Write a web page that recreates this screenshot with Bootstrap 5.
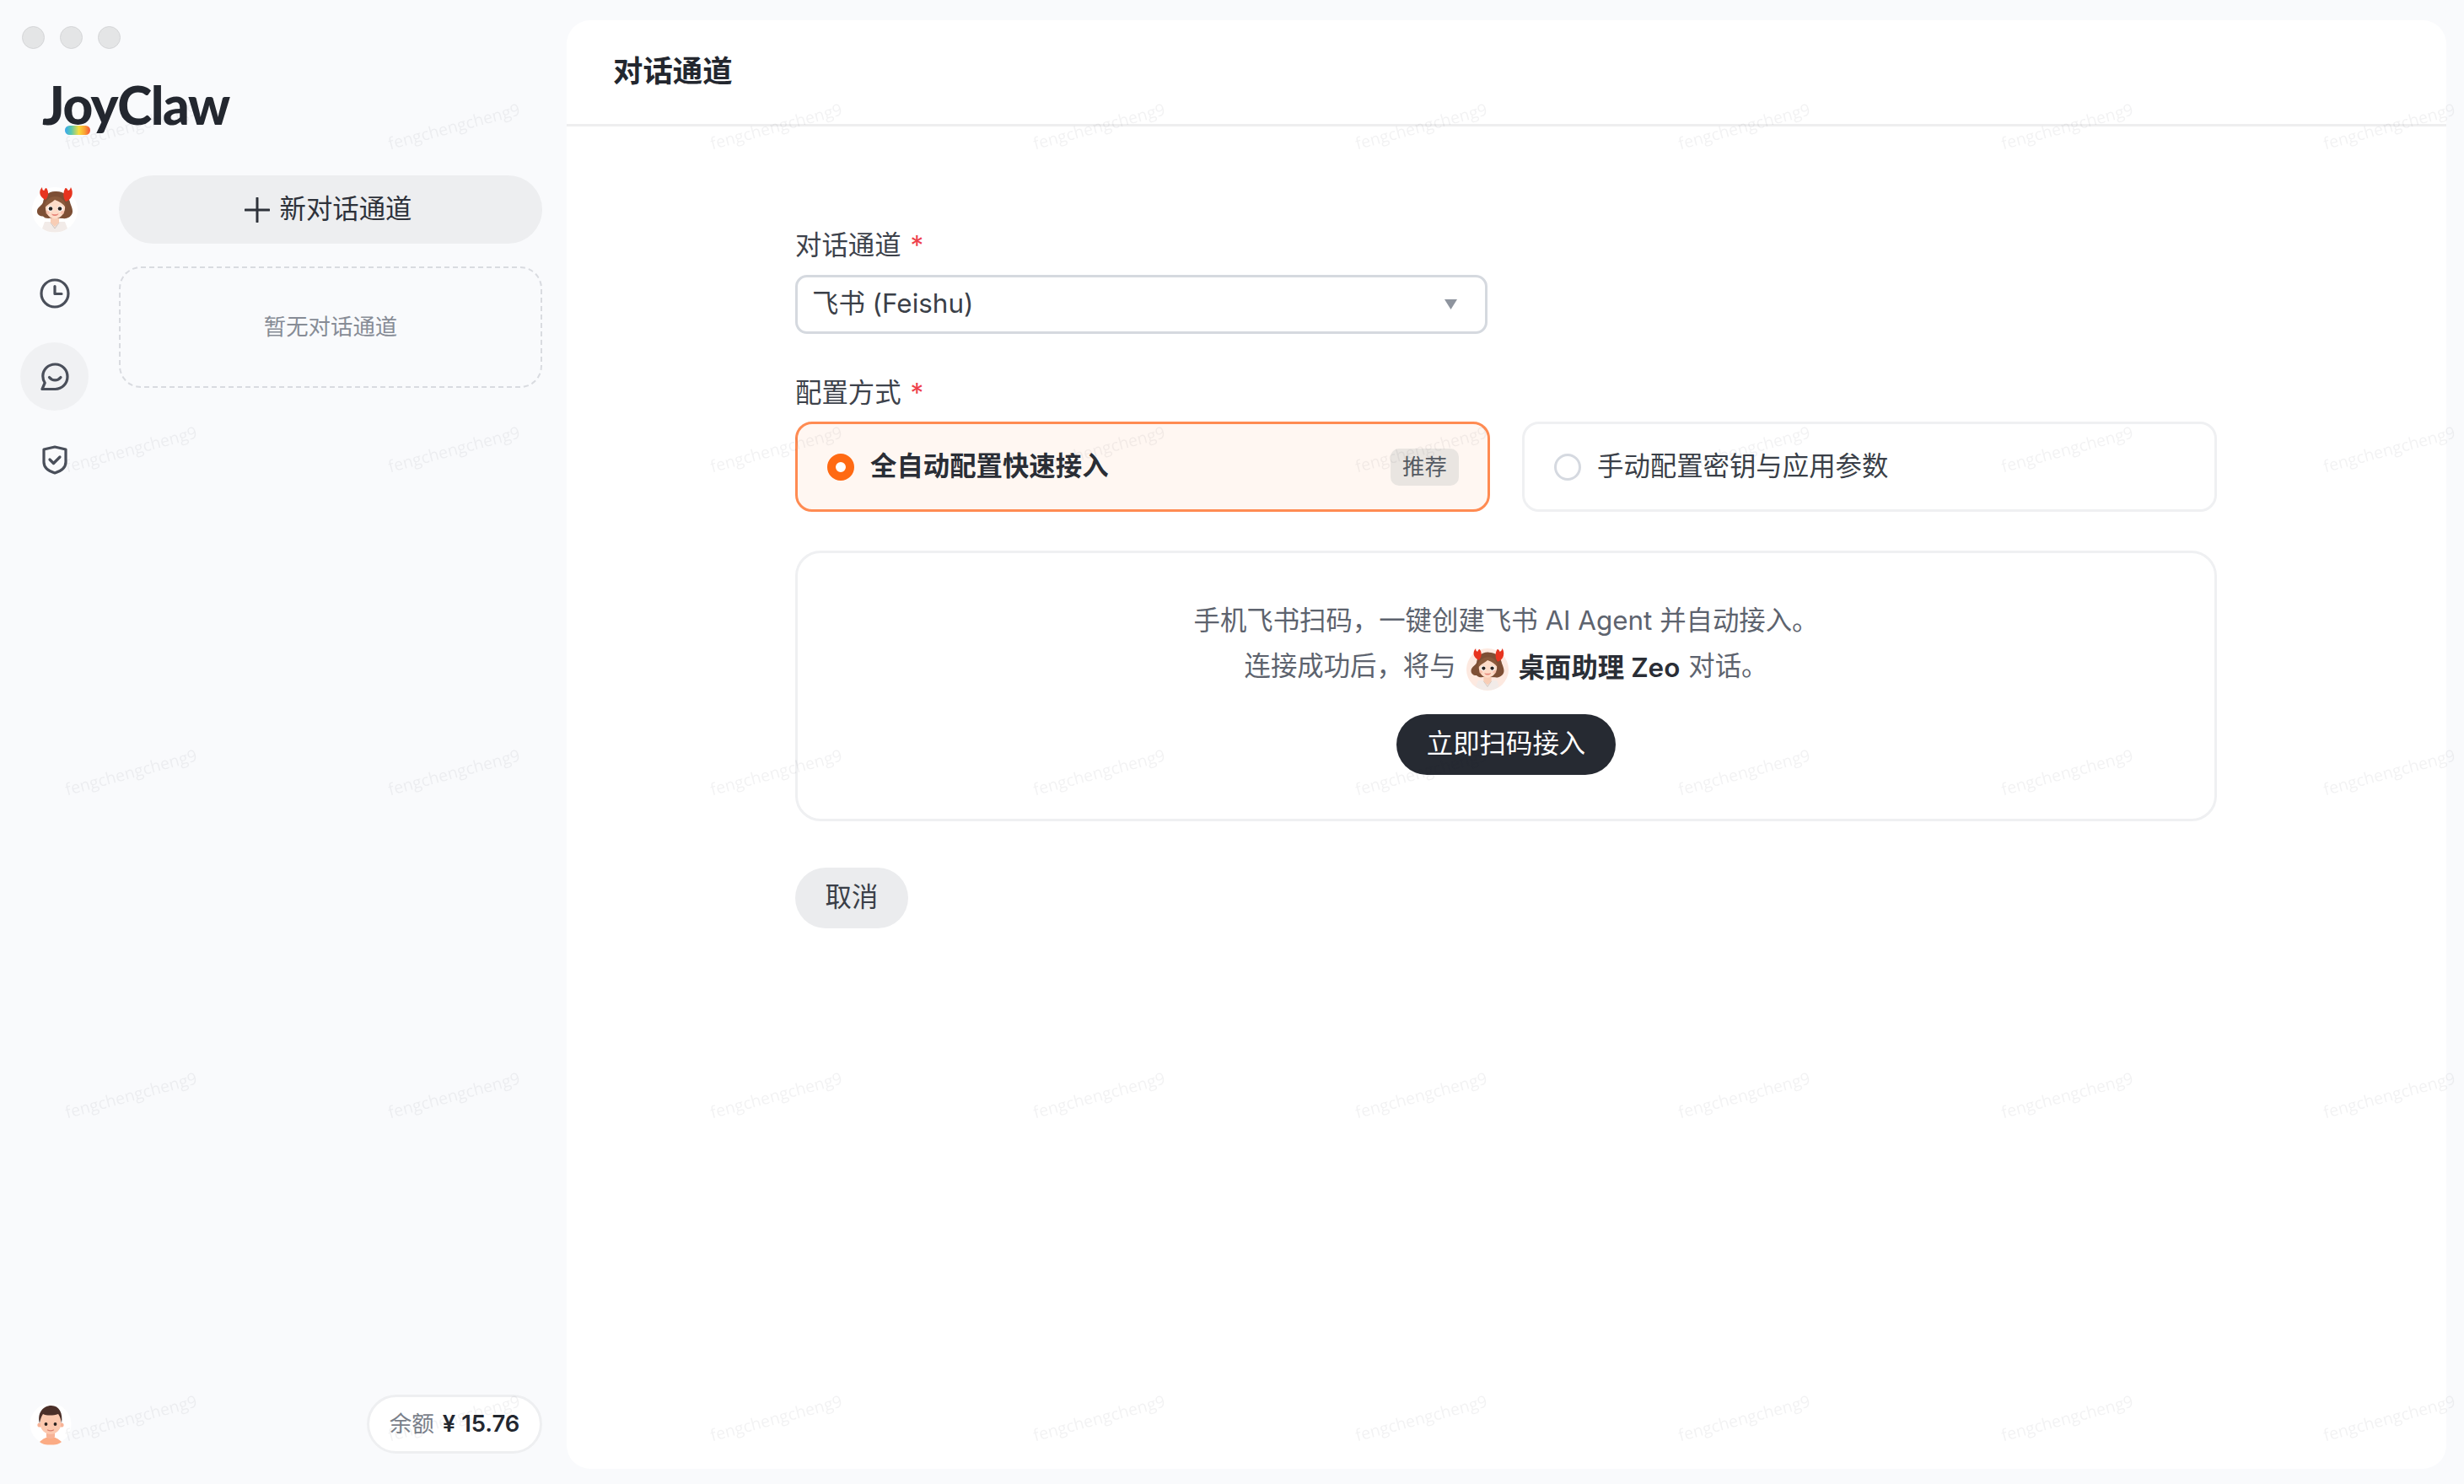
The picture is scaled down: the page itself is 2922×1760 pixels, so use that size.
<!DOCTYPE html>
<html lang="zh-CN">
<head>
<meta charset="utf-8">
<title>JoyClaw</title>
<link rel="stylesheet" href="https://cdn.jsdelivr.net/npm/bootstrap@5.3.0/dist/css/bootstrap.min.css">
<style>
html,body{height:100%}
body{margin:0;background:#f9fafc;font-family:"Inter","Noto Sans CJK SC",sans-serif;font-size:31.4px;color:#3a3f48;overflow:hidden}
.app-shell{height:1760px;width:2922px}
.side{width:672px;padding:31px 29px 36px 24px}
.lights{gap:18px;padding-left:2px;height:27px}
.lights i{display:block;width:27px;height:27px;border-radius:50%;background:#e4e5e6;border:1px solid #d4d5d7}
.logo-wrap{height:150px;padding-left:26px;padding-top:30px}
.logo-text{display:inline-block;position:relative;font-family:"Lato",sans-serif;font-weight:900;font-size:62px;line-height:72px;letter-spacing:-1.4px;color:#23272f}
.logo-bar{position:absolute;left:27px;top:61px;width:30px;height:11px;border-radius:6px;background:linear-gradient(90deg,#39a7ee,#58c8b0 25%,#f6dd3c 55%,#fba332 78%,#f2503c)}
.rail{width:81px;gap:18px}
.rail-item{width:81px;height:81px;border-radius:50%}
.rail-item.on{background:#f0f1f3}
.ava-w{width:54px;height:54px}
.listcol{width:502px;margin-left:36px}
.new-btn{height:81px;background:#edeef0;color:#2e323a;font-size:31.4px;border:0;gap:12px;padding:0 6px 0 0}
.new-btn:hover{background:#edeef0;color:#2e323a}
.empty-box{height:144px;margin-top:27px;border:2px dashed #d9dbe0;border-radius:26px;color:#878c96;font-size:26.4px}
.foot-ava{width:50px;height:50px;margin-left:11px;margin-bottom:10px}
.bal{height:70px;width:208px;background:#fff;border:3px solid #eeeff1;font-size:26.6px}
.bal-l{color:#7a808a}
.bal-v{color:#23272f;font-weight:600;margin-left:10px;font-size:27.4px}
.panel{width:2229px;height:1718px;margin-top:24px;background:#fff;border-radius:28px}
.panel-head{height:126px;padding-left:55px;border-bottom:3px solid #eeeeef}
.panel-title{font-size:35.4px;font-weight:600;color:#23272f;margin:0}
.formbox{width:1686px;margin-left:271px;padding-top:119px}
.field-lab{height:44px;line-height:44px;color:#3d424b;margin-bottom:13px}
.req{color:#ee3f4d;margin-left:2px}
.sel{width:821px;height:70px;border:3px solid #d5d9df;border-radius:14px;padding:0 33px 0 17px;background:#fff;color:#3a3f48}
.lab2{margin-top:48px;margin-bottom:12px}
.opts{gap:38px}
.opt{flex:1 1 0;height:107px;border:3px solid #eff0f2;border-radius:20px;padding:0 34px 0 35px;background:#fff}
.opt.act{border-color:#ff8b52;background:#fff7f2}
.dot{display:block;width:32px;height:32px;border-radius:50%;border:3px solid #d5d9e0;background:#fff;margin-right:19px;flex:none}
.opt.act .dot{border:10px solid #ff6a13}
.opt-t{color:#3a3f48}
.opt.act .opt-t{font-weight:600;color:#2a2e36}
.tag-rec{width:81px;height:44px;border-radius:10px;background:#e9e5e1;color:#555a63;font-size:26.4px}
.scan-box{height:321px;margin-top:46px;border:3px solid #eff0f2;border-radius:30px;padding-top:53px;color:#5d636e}
.scan-l{height:54px;line-height:54px}
.mini-ava{width:50px;height:50px;margin:0 12px}
.scan-b{font-weight:600;color:#2a2e36;margin-right:10px;position:relative;top:2px}
.go-btn{width:260px;height:72px;margin-top:30px;background:#262a32;color:#fff;font-size:31.4px;border:0;padding:0}
.go-btn:hover{background:#262a32;color:#fff}
.cancel-btn{width:134px;height:72px;margin-top:55px;background:#ebecee;color:#3a3f48;font-size:31.4px;border:0;padding:0}
.cancel-btn:hover{background:#ebecee;color:#3a3f48}
.wm-clip{position:fixed;top:0;right:0;bottom:0;left:0;overflow:hidden;pointer-events:none;z-index:5}
.wm-layer{display:grid;margin:-42px 0 0 -36px;width:3061px;grid-template-columns:repeat(8,382.6px);grid-auto-rows:383px}
.wm-layer span{display:flex;align-items:center;justify-content:center;font-family:"Open Sans",sans-serif;font-size:19.5px;color:rgba(30,35,45,.06);transform:rotate(-15deg);white-space:nowrap}
</style>
</head>
<body>
<svg width="0" height="0" class="d-block position-absolute">
  <defs>
    <symbol id="zeo" viewBox="0 0 54 54">
      <path d="M15 41h24l3 8c-4 3-9 4.500-15 4.500S16 52 12 49z" fill="#f2ebe8"/>
      <path d="M22 42l5 7 5-7" fill="none" stroke="#cfc5bf" stroke-width="1"/>
      <path d="M22 35h10v7l-5 5-5-5z" fill="#f8cdb5"/>
      <path d="M29 5C20 4 14 10 13 18c-1 4-6.500 5-7 10-.5 4 3 7 7 6.500 2 2.500 6 3 10 2l14 .5c4 1 9-2 10.500-5.500 1.500-4-.5-8-2-12C44 11 38 5 29 5z" fill="#7d4f35"/>
      <path d="M16 22c1-4 5-8 10-8 5 2 11 3 13 9 1 7-5 14.500-12 14.500S15 30 16 22z" fill="#fddcc8"/>
      <path d="M15 25c-1-8 5-14 13-14 7 0 12 6 12 13-3-4-7-7-13-9-3 3-9 5-12 10z" fill="#8a5a3c"/>
      <path d="M16 15C9 12 7 5 12 0c0 3 1 4 2.500 4 0-1 1-3 2.500-3 3 4 3 10-1 14z" fill="#e7341f"/>
      <path d="M40 17c7-2 10-10 6-17-1 3-2 4-3.500 4 0-1-1-3-3-3-3 5-3 11.500.5 16z" fill="#e7341f"/>
      <ellipse cx="21.500" cy="25.500" rx="3" ry="3.200" fill="#fff"/><ellipse cx="33.500" cy="25.500" rx="3" ry="3.200" fill="#fff"/>
      <circle cx="22" cy="25.500" r="2.300" fill="#2a2320"/><circle cx="33" cy="25.500" r="2.300" fill="#2a2320"/>
      <path d="M23 31.500c2.500 1 6 1 8.500-.3-1 3.600-7.500 3.800-8.500.3z" fill="#e8877a"/>
      <circle cx="18.500" cy="30" r="2.200" fill="#f7b5a2" opacity=".6"/><circle cx="36" cy="30" r="2.200" fill="#f7b5a2" opacity=".6"/>
    </symbol>
  </defs>
</svg>

<div class="app-shell d-flex">
  <aside class="side d-flex flex-column">
    <div class="lights d-flex"><i></i><i></i><i></i></div>
    <div class="logo-wrap"><span class="logo-text">JoyClaw<span class="logo-bar"></span></span></div>
    <div class="d-flex flex-grow-1">
      <nav class="rail d-flex flex-column">
        <div class="rail-item d-flex align-items-center justify-content-center">
          <div class="ava-w rounded-circle bg-white"><svg width="54" height="54"><use href="#zeo"/></svg></div>
        </div>
        <div class="rail-item d-flex align-items-center justify-content-center">
          <svg width="36" height="36" viewBox="0 0 36 36" fill="none" stroke="#4a4f5a" stroke-width="3.200" stroke-linecap="round" stroke-linejoin="round"><circle cx="18" cy="18" r="16"/><path d="M18 9.500V18.500H26"/></svg>
        </div>
        <div class="rail-item on d-flex align-items-center justify-content-center">
          <svg width="34" height="34" viewBox="0 0 34 34" fill="none" stroke="#4a4f5a" stroke-width="3.200" stroke-linecap="round" stroke-linejoin="round"><path d="M17.500 2C9 2 2.800 8.500 2.800 16c0 3 .9 5.700 2.400 8L2 31.500h15.500C25.500 31.500 32 25 32 16.800 32 8.500 25.800 2 17.500 2z"/><path d="M10.500 17.500c3.500 4.500 10 4.500 13.500 0"/></svg>
        </div>
        <div class="rail-item d-flex align-items-center justify-content-center">
          <svg width="30" height="35" viewBox="0 0 30 35" fill="none" stroke="#4a4f5a" stroke-width="3.200" stroke-linecap="round" stroke-linejoin="round"><path d="M15 2 2 5v15c0 6 5 10.500 13 13 8-2.500 13-7 13-13V5z"/><path d="M9 17l4.500 4.500L21 14"/></svg>
        </div>
      </nav>
      <div class="listcol">
        <button class="btn new-btn rounded-pill w-100 d-flex align-items-center justify-content-center" type="button">
          <svg width="30" height="30" viewBox="0 0 30 30" stroke="#2e323a" stroke-width="3" stroke-linecap="round"><path d="M15 1v28M1 15h28"/></svg>
          <span>新对话通道</span>
        </button>
        <div class="empty-box d-flex align-items-center justify-content-center">暂无对话通道</div>
      </div>
    </div>
    <div class="d-flex justify-content-between align-items-end">
      <div class="foot-ava">
        <svg width="50" height="50" viewBox="0 0 50 50">
          <circle cx="25" cy="25" r="24.500" fill="#fff"/>
          <path d="M12 46c3-3 7-5 10-6h6c3 1 7 3 10 6-3 3-8 3.500-13 3.500S15 49 12 46z" fill="#fbab84"/>
          <path d="M20 33h10v7c-2 3-8 3-10 0z" fill="#f7b396"/>
          <circle cx="12" cy="26" r="2.600" fill="#f7b396"/><circle cx="38" cy="26" r="2.600" fill="#f7b396"/>
          <path d="M13 16c0-6 6-8 12-8s12 2 12 8v10c0 6-6 11-12 11S13 32 13 26z" fill="#fcc8ae"/>
          <path d="M12 24C9 13 15 3 26 3c9 0 14 9 12 21-1-6-2-8-4-11-6 2-14 2-18 0-2 3-3 6-4 11z" fill="#4b2f28"/>
          <circle cx="19.500" cy="25" r="1.900" fill="#2a2320"/><circle cx="30.500" cy="25" r="1.900" fill="#2a2320"/>
          <path d="M21.500 32c2 1 5 1 7 0" stroke="#d9806e" stroke-width="1.200" fill="none" stroke-linecap="round"/>
        </svg>
      </div>
      <div class="bal rounded-pill d-flex align-items-center justify-content-center">
        <span class="bal-l">余额</span><span class="bal-v">¥ 15.76</span>
      </div>
    </div>
  </aside>

  <main class="panel d-flex flex-column">
    <header class="panel-head d-flex align-items-center">
      <h1 class="panel-title">对话通道</h1>
    </header>
    <div class="formbox">
      <div class="field-lab">对话通道 <span class="req">*</span></div>
      <div class="sel d-flex align-items-center justify-content-between">
        <span>飞书 (Feishu)</span>
        <svg width="15" height="12" viewBox="0 0 15 12"><path d="M0 0h15L7.500 12z" fill="#8e949e"/></svg>
      </div>
      <div class="field-lab lab2">配置方式 <span class="req">*</span></div>
      <div class="opts d-flex">
        <div class="opt act d-flex align-items-center">
          <span class="dot"></span><span class="opt-t flex-grow-1">全自动配置快速接入</span>
          <span class="tag-rec d-flex align-items-center justify-content-center">推荐</span>
        </div>
        <div class="opt d-flex align-items-center">
          <span class="dot"></span><span class="opt-t">手动配置密钥与应用参数</span>
        </div>
      </div>
      <div class="scan-box d-flex flex-column align-items-center">
        <div class="scan-l">手机飞书扫码，一键创建飞书 AI Agent 并自动接入。</div>
        <div class="scan-l d-flex align-items-center">连接成功后，将与
          <span class="mini-ava rounded-circle d-inline-block"><svg width="50" height="50"><circle cx="25" cy="25" r="25" fill="#fde9e0"/><use href="#zeo" width="50" height="50"/></svg></span>
          <span class="scan-b">桌面助理 Zeo</span>对话。
        </div>
        <button class="btn go-btn rounded-pill" type="button">立即扫码接入</button>
      </div>
      <button class="btn cancel-btn rounded-pill" type="button">取消</button>
    </div>
  </main>
</div>

<div class="wm-clip"><div class="wm-layer">
  <span>fengchengcheng9</span><span>fengchengcheng9</span><span>fengchengcheng9</span><span>fengchengcheng9</span><span>fengchengcheng9</span><span>fengchengcheng9</span><span>fengchengcheng9</span><span>fengchengcheng9</span>
  <span>fengchengcheng9</span><span>fengchengcheng9</span><span>fengchengcheng9</span><span>fengchengcheng9</span><span>fengchengcheng9</span><span>fengchengcheng9</span><span>fengchengcheng9</span><span>fengchengcheng9</span>
  <span>fengchengcheng9</span><span>fengchengcheng9</span><span>fengchengcheng9</span><span>fengchengcheng9</span><span>fengchengcheng9</span><span>fengchengcheng9</span><span>fengchengcheng9</span><span>fengchengcheng9</span>
  <span>fengchengcheng9</span><span>fengchengcheng9</span><span>fengchengcheng9</span><span>fengchengcheng9</span><span>fengchengcheng9</span><span>fengchengcheng9</span><span>fengchengcheng9</span><span>fengchengcheng9</span>
  <span>fengchengcheng9</span><span>fengchengcheng9</span><span>fengchengcheng9</span><span>fengchengcheng9</span><span>fengchengcheng9</span><span>fengchengcheng9</span><span>fengchengcheng9</span><span>fengchengcheng9</span>
</div></div>
<script src="https://cdn.jsdelivr.net/npm/bootstrap@5.3.0/dist/js/bootstrap.bundle.min.js"></script>
</body>
</html>
